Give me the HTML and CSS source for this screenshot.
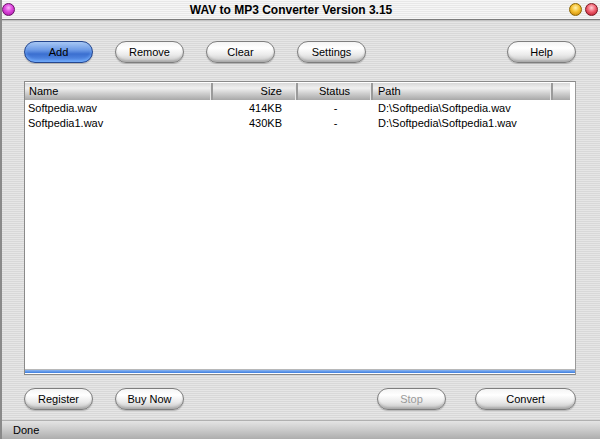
FILE: index.html
```html
<!DOCTYPE html>
<html>
<head>
<meta charset="utf-8">
<link rel="stylesheet" href="styles.css">
</head>
<body>
<div class="window">
  <div class="titlebar">
    <span class="orb orb-purple"></span>
    <span class="title">WAV to MP3 Converter Version 3.15</span>
    <span class="orbs">
      <span class="orb orb-yellow"></span>
      <span class="orb orb-red"></span>
    </span>
  </div>
  <div class="toolbar">
    <button class="btn btn-blue">Add</button>
    <button class="btn">Remove</button>
    <button class="btn">Clear</button>
    <button class="btn">Settings</button>
    <span class="spacer"></span>
    <button class="btn">Help</button>
  </div>
  <div class="list">
    <div class="list-head">
      <div class="col c-name">Name</div>
      <div class="col c-size">Size</div>
      <div class="col c-status">Status</div>
      <div class="col c-path">Path</div>
      <div class="col c-extra"></div>
    </div>
    <div class="rows">
      <div class="row">
        <div class="cell c-name">Softpedia.wav</div>
        <div class="cell c-size">414KB</div>
        <div class="cell c-status">-</div>
        <div class="cell c-path">D:\Softpedia\Softpedia.wav</div>
      </div>
      <div class="row">
        <div class="cell c-name">Softpedia1.wav</div>
        <div class="cell c-size">430KB</div>
        <div class="cell c-status">-</div>
        <div class="cell c-path">D:\Softpedia\Softpedia1.wav</div>
      </div>
    </div>
    <div class="progress"></div>
  </div>
  <div class="bottombar">
    <button class="btn">Register</button>
    <button class="btn">Buy Now</button>
    <span class="spacer"></span>
    <button class="btn btn-disabled">Stop</button>
    <button class="btn btn-wide">Convert</button>
  </div>
  <div class="statusbar">Done</div>
</div>
</body>
</html>
```
FILE: styles.css
```css
html, body {
  margin: 0;
  padding: 0;
}
body {
  font-family: "Liberation Sans", Arial, sans-serif;
  font-size: 11px;
  color: #000;
}
.window {
  width: 600px;
  height: 439px;
  display: flex;
  flex-direction: column;
  box-sizing: border-box;
  border-left: 2px solid #8a8a8a;
  background: repeating-linear-gradient(180deg, #e6e6e6 0 1px, #d8d8d8 1px 2px);
  overflow: hidden;
}
.titlebar {
  height: 20px;
  display: flex;
  align-items: center;
  padding: 0 2px 0 0;
  box-sizing: border-box;
  background: repeating-linear-gradient(180deg, #f6f6f6 0 1px, #e8e8e8 1px 2px);
  border-bottom: 1px solid #7c7c7c;
  box-shadow: 0 1px 0 #c4c4c4;
}
.title {
  flex: 1;
  text-align: center;
  font-weight: bold;
  font-size: 12px;
  margin-left: -2px;
}
.orbs {
  display: flex;
  gap: 3px;
}
.orb {
  width: 13px;
  height: 13px;
  border-radius: 50%;
  display: inline-block;
  box-sizing: border-box;
}
.orb-purple {
  background: radial-gradient(circle at 50% 35%, #f7b6f7 0, #e04ce0 40%, #a3109f 100%);
  border: 1px solid #6a1068;
}
.orb-yellow {
  background: radial-gradient(circle at 50% 35%, #fff3b0 0, #f5c030 45%, #c07a00 100%);
  border: 1px solid #8a6400;
}
.orb-red {
  background: radial-gradient(circle at 50% 35%, #ffd0d6 0, #f06070 45%, #b01020 100%);
  border: 1px solid #7c1a24;
}
.toolbar, .bottombar {
  display: flex;
  align-items: center;
  gap: 22px;
  padding: 0 24px 0 22px;
}
.toolbar {
  margin-top: 21px;
}
.spacer {
  flex: 1;
}
.btn {
  width: 69px;
  height: 22px;
  padding: 0;
  font-family: "Liberation Sans", Arial, sans-serif;
  font-size: 11px;
  color: #000;
  border-radius: 11px;
  border: 1px solid #7e7e7e;
  background: linear-gradient(180deg, #f4f4f4 0%, #ffffff 30%, #eaeaea 65%, #c4c4c4 100%);
  box-shadow: inset 0 -2px 2px rgba(0,0,0,0.14), 0 1px 1px rgba(0,0,0,0.2);
  cursor: default;
}
.btn-blue {
  border-color: #24468e;
  background: linear-gradient(180deg, #a8c8f4 0%, #6c9ae6 40%, #3b6fd0 60%, #5c92ea 100%);
  box-shadow: inset 0 -2px 3px rgba(120,180,255,0.7), 0 1px 1px rgba(0,0,0,0.2);
}
.btn-disabled {
  color: #9a9a9a;
}
.btn-wide {
  width: 101px;
}
.list {
  margin: 18px 24px 0 22px;
  height: 294px;
  background: #fff;
  border: 1px solid #8a8a8a;
  border-right-color: #9a9a9a;
  display: flex;
  flex-direction: column;
  box-sizing: border-box;
}
.list-head {
  display: flex;
  height: 17px;
  margin-top: 1px;
  background: linear-gradient(180deg, #d8d8d8 0%, #f0f0f0 30%, #d0d0d0 60%, #a8a8a8 100%);
  margin-right: 5px;
}
.col {
  line-height: 17px;
  box-sizing: border-box;
  border-right: 2px solid #9a9a9a;
  box-shadow: inset -1px 0 0 #e8e8e8;
}
.c-name { width: 188px; padding-left: 4px; }
.c-size { width: 85px; text-align: right; padding-right: 14px; }
.c-status { width: 75px; text-align: center; }
.c-path { width: 180px; padding-left: 5px; }
.c-extra { width: 17px; border-right: none; box-shadow: none; }
.rows {
  flex: 1;
  padding-top: 1px;
}
.row {
  display: flex;
  height: 15px;
  line-height: 15px;
}
.cell { box-sizing: border-box; }
.row .c-name { padding-left: 3px; }
.row .c-size { padding-right: 16px; }
.row .c-path { padding-left: 5px; width: 200px; }
.progress {
  height: 3px;
  background: linear-gradient(180deg, #8ab4f0, #3d7ee0);
  border-top: 1px solid #b8b8b8;
  margin-bottom: 1px;
}
.bottombar {
  margin-top: 13px;
}
.bottombar .btn:last-child {
  margin-left: 7px;
}
.statusbar {
  margin-top: auto;
  height: 18px;
  line-height: 18px;
  padding-left: 11px;
  background: linear-gradient(180deg, #e4e4e4 0%, #cacaca 50%, #adadad 100%);
  border-top: 1px solid #b0b0b0;
}
```
